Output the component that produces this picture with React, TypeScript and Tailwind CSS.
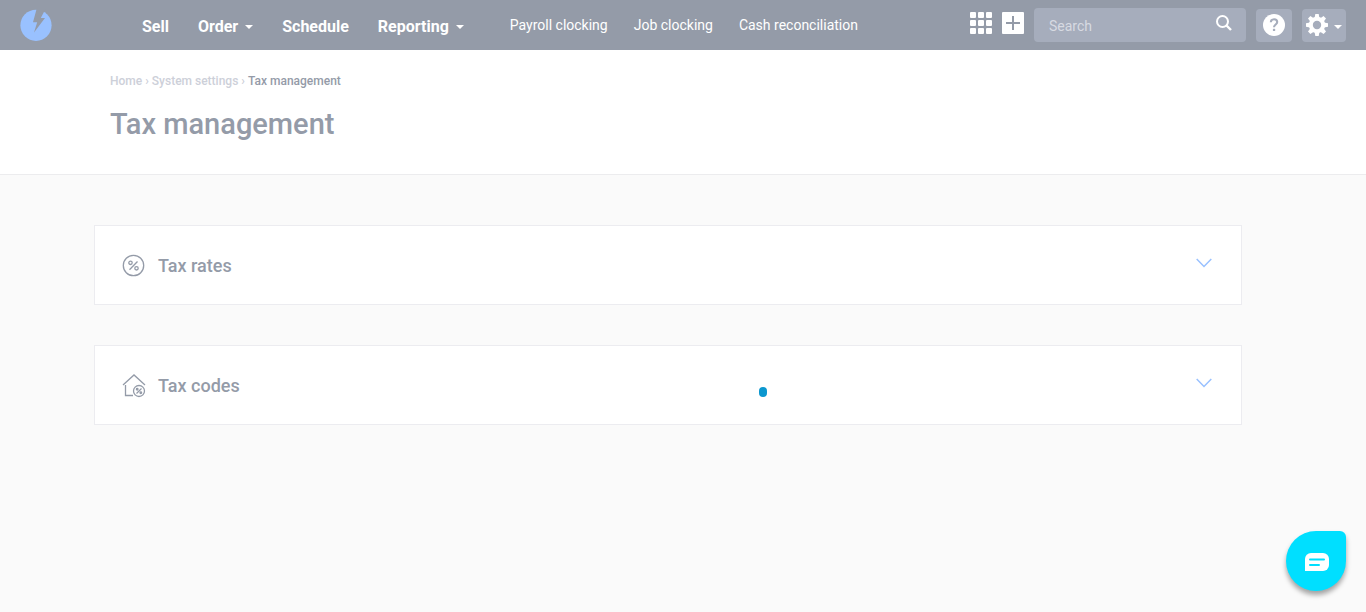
import React, { useState } from "react";

function Caret() {
  return (
    <svg className="h-1 w-2 shrink-0" viewBox="0 0 8 4" fill="currentColor" aria-hidden="true">
      <path d="M0 0h8L4 4z" />
    </svg>
  );
}

function Logo() {
  return (
    <svg className="size-8" viewBox="0 0 32 32" aria-hidden="true">
      <circle cx="16" cy="16.300" r="15.600" fill="#99c1ff" />
      <path fill="#949ba8" d="M16.600 0L13 13.200H17.200L14 23.500L25 9H20.800L25.500 0Z" />
    </svg>
  );
}

function GridIcon() {
  return (
    <svg className="size-[22px]" viewBox="0 0 22 22" fill="white" aria-hidden="true">
      {[0, 8, 16].map((y) =>
        [0, 8, 16].map((x) => <rect key={`${x}-${y}`} x={x} y={y} width="6" height="6" rx="1" />),
      )}
    </svg>
  );
}

function PlusIcon() {
  return (
    <svg className="size-[22px]" viewBox="0 0 22 22" aria-hidden="true">
      <rect width="22" height="22" rx="1" fill="white" />
      <path d="M11 4v14M4 11h14" stroke="#949ba8" strokeWidth="2" />
    </svg>
  );
}

function SearchIcon() {
  return (
    <svg className="size-4" viewBox="0 0 16 16" fill="none" stroke="white" strokeWidth="2" aria-hidden="true">
      <circle cx="6.500" cy="6.500" r="5.500" />
      <path d="M10.500 10.500l4.500 4.500" strokeWidth="2.400" />
    </svg>
  );
}

function HelpIcon() {
  return (
    <svg className="size-[22px]" viewBox="0 0 22 22" aria-hidden="true">
      <circle cx="11" cy="11" r="11" fill="white" />
      <path d="M7.800 8.300C7.900 6.300 9.200 5.300 11 5.300C12.900 5.300 14.200 6.400 14.200 8.100C14.200 10.500 11 10.500 11 13.300" fill="none" stroke="#a6adbc" strokeWidth="2.100" />
      <rect x="9.900" y="14.800" width="2.300" height="2.300" rx="0.600" fill="#a6adbc" />
    </svg>
  );
}

function GearIcon() {
  return (
    <svg className="size-[22px]" viewBox="0 0 22 22" aria-hidden="true">
      <g fill="white">
        {[0, 45, 90, 135].map((a) => (
          <path key={a} transform={`rotate(${a} 11 11)`} d="M9.300 0h3.400l0.700 4v14l-0.700 4H9.300l-0.700-4V4z" />
        ))}
        <circle cx="11" cy="11" r="8.200" />
      </g>
      <circle cx="11" cy="11" r="4.200" fill="#a6adbc" />
    </svg>
  );
}

function PercentIcon() {
  return (
    <svg className="size-6" viewBox="0 0 24 24" fill="none" stroke="#949ba8" strokeWidth="1.300" aria-hidden="true">
      <circle cx="11.500" cy="11.500" r="10.200" />
      <path d="M15.500 7.500l-8 8.200" />
      <circle cx="8.500" cy="8.800" r="1.700" />
      <circle cx="14.500" cy="14.300" r="1.700" />
    </svg>
  );
}

function HouseIcon() {
  return (
    <svg className="size-6" viewBox="0 0 24 24" fill="none" stroke="#949ba8" strokeWidth="1.300" aria-hidden="true">
      <path d="M1 11L12 1l11 10M3.500 11v10.500H11" />
      <circle cx="17" cy="17" r="5.500" />
      <path d="M19.500 14.500l-5 5" />
      <circle cx="15.200" cy="15.200" r="0.800" />
      <circle cx="18.800" cy="18.800" r="0.800" />
    </svg>
  );
}

function Panel({ title, icon }: { title: string; icon: React.ReactNode }) {
  const [open, setOpen] = useState(false);
  return (
    <section className="border border-[#ececf0] bg-white">
      <h2>
        <button
          type="button"
          aria-expanded={open}
          onClick={() => setOpen(!open)}
          className="flex h-[78px] w-full items-center pr-[29px] pl-[27px] text-left"
        >
          <span className="pt-[2px]">{icon}</span>
          <span className="ml-3 pt-[2px] text-lg leading-6 font-medium text-[#949ba8]">{title}</span>
          <svg className="mb-1 ml-auto h-[10px] w-4" viewBox="0 0 16 10" fill="none" stroke="#99c1ff" strokeWidth="1.500" aria-hidden="true">
            <path d="M0.700 1L8 8.500L15.300 1" />
          </svg>
        </button>
      </h2>
      {open && <p className="px-7 pb-6 text-sm text-[#949ba8]">{title}</p>}
    </section>
  );
}

export default function App() {
  return (
    <div className="min-h-screen bg-[#fafafa] font-['Roboto','Liberation_Sans',sans-serif] text-[#949ba8]">
      <header className="flex h-[50px] items-center bg-[#949ba8] pr-5 pl-5 text-white">
        <a href="#home" aria-label="Home">
          <Logo />
        </a>
        <nav className="ml-[90px] flex items-center whitespace-nowrap">
          <div className="flex items-center gap-[29px] pt-1 text-base leading-5 font-bold">
            <a href="#sell">Sell</a>
            <button type="button" className="flex items-center gap-[7px]">
              Order <Caret />
            </button>
            <a href="#schedule">Schedule</a>
            <button type="button" className="flex items-center gap-[7px]">
              Reporting <Caret />
            </button>
          </div>
          <div className="ml-[46px] flex items-center gap-[26px] text-sm leading-5">
            <a href="#payroll">Payroll clocking</a>
            <a href="#job">Job clocking</a>
            <a href="#cash">Cash reconciliation</a>
          </div>
        </nav>
        <div className="ml-auto flex items-center">
          <button type="button" aria-label="Apps" className="mb-1">
            <GridIcon />
          </button>
          <button type="button" aria-label="Add" className="mb-1 ml-[10px]">
            <PlusIcon />
          </button>
          <form role="search" className="ml-[10px] flex h-[34px] w-[212px] items-center rounded bg-[#a6adbc] pr-[14px] pl-[15px]">
            <input
              type="text"
              aria-label="Search"
              placeholder="Search"
              className="min-w-0 flex-1 bg-transparent pt-[2px] text-sm leading-5 outline-none placeholder:text-[#d7dae2]"
            />
            <button type="button" aria-label="Submit search" className="mb-1">
              <SearchIcon />
            </button>
          </form>
          <button type="button" aria-label="Help" className="ml-[10px] flex h-[33px] w-9 items-center justify-center rounded bg-[#a6adbc]">
            <HelpIcon />
          </button>
          <button type="button" aria-label="Settings" className="ml-[10px] flex h-[33px] w-11 items-center justify-between rounded bg-[#a6adbc] px-1">
            <GearIcon />
            <span className="pt-1">
              <Caret />
            </span>
          </button>
        </div>
      </header>

      <div className="border-b border-[#ececee] bg-white pt-[22px] pb-[30px] pl-[110px]">
        <nav aria-label="Breadcrumb" className="flex gap-[3px] text-xs leading-[18px] font-medium text-[#cdd0d9]">
          <a href="#home">Home</a>
          <span>›</span>
          <a href="#settings">System settings</a>
          <span>›</span>
          <span className="text-[#949ba8]">Tax management</span>
        </nav>
        <h1 className="mt-[14px] text-[29px] leading-10 font-medium">Tax management</h1>
      </div>

      <main className="mt-[50px] mr-[124px] ml-[94px] flex flex-col gap-10">
        <Panel title="Tax rates" icon={<PercentIcon />} />
        <Panel title="Tax codes" icon={<HouseIcon />} />
      </main>

      <div role="status" aria-label="Loading" className="fixed top-[387px] left-[759px] h-[10px] w-2 rounded-full bg-[#0b97cf]" />

      <button
        type="button"
        aria-label="Open chat"
        className="fixed right-5 bottom-[21px] flex size-[60px] items-center justify-center rounded-[30px_6px_30px_30px] bg-[#00dfff] shadow-[0_4px_5px_rgba(0,0,0,0.35)]"
      >
        <svg className="mt-[2px] ml-[2px] h-[18px] w-6" viewBox="0 0 24 18" aria-hidden="true">
          <path fill="white" d="M6 0h12a6 6 0 0 1 6 6v6a6 6 0 0 1-6 6H0V6a6 6 0 0 1 6-6z" />
          <path d="M5 6.500h14M5 12h9" stroke="#00dfff" strokeWidth="2" strokeLinecap="round" />
        </svg>
      </button>
    </div>
  );
}
